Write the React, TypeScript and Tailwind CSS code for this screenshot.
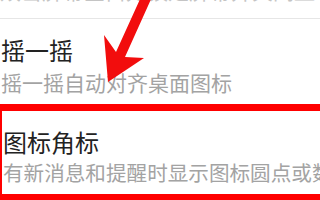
import React from "react";

export default function App() {
  const font = { fontFamily: '"Noto Sans CJK SC", "Noto Sans", sans-serif' };
  return (
    <div className="relative w-[320px] h-[200px] overflow-hidden bg-white" style={font}>
      <div className="h-[19px] border-b border-[#e6e6e6] overflow-hidden">
        <div className="mt-[-20px] text-[21px] leading-[21px] text-[#c4c4c4] whitespace-nowrap">
          双击屏幕空白处锁定屏幕并关闭显示
        </div>
      </div>
      <div className="flex flex-col pl-[1px]">
        <div className="mt-[19px] text-[24px] leading-[24px] text-[#222222] whitespace-nowrap">摇一摇</div>
        <div className="mt-[10px] text-[21px] leading-[21px] text-[#a3a3a3] whitespace-nowrap">摇一摇自动对齐桌面图标</div>
      </div>
      <div className="flex flex-col pl-[3px]">
        <div className="mt-[37px] text-[24px] leading-[24px] text-[#222222] whitespace-nowrap">图标角标</div>
        <div className="mt-[8px] text-[20.6px] leading-[21px] text-[#a3a3a3] whitespace-nowrap">有新消息和提醒时显示图标圆点或数字</div>
      </div>
      <div className="absolute left-[-5px] top-[104px] w-[340px] h-[97px] border-[7px] border-[#ff0000]" />
      <svg className="absolute left-0 top-0" width="320" height="200" viewBox="0 0 320 200">
        <polygon
          points="141,-3 152,-3 125,57 144,58 108,82 104,35 116,52"
          fill="#f20d0d"
        />
      </svg>
    </div>
  );
}
